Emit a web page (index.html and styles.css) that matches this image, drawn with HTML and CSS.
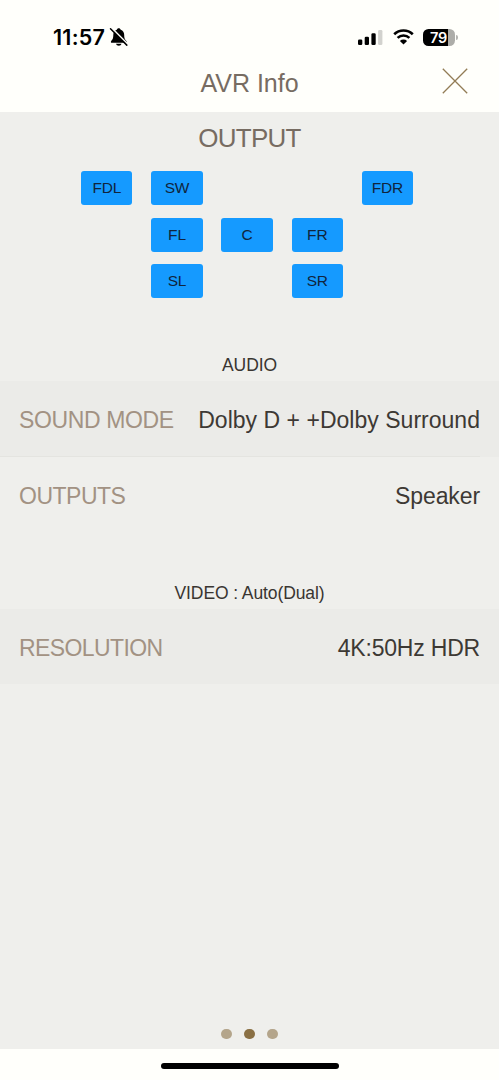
FILE: index.html
```html
<!DOCTYPE html>
<html lang="en">
<head>
<meta charset="utf-8">
<meta name="viewport" content="width=device-width, initial-scale=1">
<title>AVR Info</title>
<link rel="stylesheet" href="styles.css">
</head>
<body>
<div class="screen">
  <div class="status">
    <span class="time">11:57</span>
    <svg class="bell" width="20" height="20" viewBox="0 0 20 20" aria-hidden="true">
      <path d="M9.7 1.2c-1 0-1.7.6-1.9 1.5C5.5 3.5 4.3 5.300 4.300 8c0 3.700-1 4.700-2.100 6-.7.9-.3 1.800.7 1.800h13.800c1 0 1.400-.9.700-1.800-1.200-1.300-2.200-2.300-2.200-6 0-2.700-1.200-4.500-3.500-5.300-.2-.9-1-1.500-2-1.500z"/>
      <path d="M7 16.800h5.500c-.3 1.300-1.300 2-2.700 2s-2.500-.7-2.800-2z"/>
      <path class="bell-gap" d="M2.600.9 19 17.400"/>
      <path class="bell-slash" d="M1.500 1.800 17.800 18.100"/>
    </svg>
    <span class="spacer"></span>
    <svg class="signal" width="25" height="17" viewBox="0 0 25 17" aria-hidden="true">
      <rect x="0" y="10.500" width="4.300" height="5.500" rx="1.300"/>
      <rect x="6.700" y="7.700" width="4.300" height="8.300" rx="1.300"/>
      <rect x="13.400" y="4.300" width="4.300" height="11.700" rx="1.300"/>
      <rect class="off" x="20.100" y="1" width="4.300" height="15" rx="1.300"/>
    </svg>
    <svg class="wifi" width="21" height="16" viewBox="0 0 21 16" aria-hidden="true">
      <path class="arc" d="M1.200 5.300a13.400 13.400 0 0 1 18.600 0M4.600 8.900a8.500 8.500 0 0 1 11.800 0"/>
      <path d="M10.500 15.500 6.900 12a5.100 5.100 0 0 1 7.200 0z"/>
    </svg>
    <div class="battery"><span>79</span></div>
    <i class="battery-tip"></i>
  </div>
  <header class="header">
    <h1>AVR Info</h1>
    <svg class="close" width="26" height="26" viewBox="0 0 26 26" role="img" aria-label="Close"><path d="M.8.800 25.200 25.200M25.200.800.800 25.200"/></svg>
  </header>
  <main class="content">
    <h2 class="output-title">OUTPUT</h2>
    <div class="speakers">
      <span class="chip">FDL</span><span class="chip">SW</span><span class="chip col5">FDR</span>
      <span class="chip col2">FL</span><span class="chip">C</span><span class="chip">FR</span>
      <span class="chip col2">SL</span><span class="chip col4">SR</span>
    </div>
    <h3 class="section audio">AUDIO</h3>
    <div class="row shaded"><span class="label sound">SOUND MODE</span><span class="value dolby">Dolby D + +Dolby Surround</span></div>
    <div class="divider"></div>
    <div class="row outputs"><span class="label">OUTPUTS</span><span class="value">Speaker</span></div>
    <h3 class="section video">VIDEO : Auto(Dual)</h3>
    <div class="row shaded last"><span class="label resolution">RESOLUTION</span><span class="value hdr">4K:50Hz HDR</span></div>
    <div class="dots"><i></i><i class="active"></i><i></i></div>
  </main>
  <footer class="home"><div class="home-bar"></div></footer>
</div>
</body>
</html>
```
FILE: styles.css
```css
* { box-sizing: border-box; }
body { margin: 0; background: #fffffb; font-family: "Liberation Sans", Arial, sans-serif; }
h1, h2, h3 { margin: 0; font-weight: 400; }
.screen { width: 499px; height: 1080px; display: flex; flex-direction: column; overflow: hidden; }
.status { height: 60px; padding: 14px 41px 0 53px; display: flex; align-items: center; flex: none; }
.time { font: 600 21.500px/24px Inter, sans-serif; letter-spacing: .25px; color: #000; }
.bell { margin-left: 4px; }
.bell-gap { stroke: #fffffb; stroke-width: 1.500; }
.bell-slash { stroke: #000; stroke-width: 1.500; stroke-linecap: round; }
.spacer { flex: 1; }
.off { fill: #d2d2ce; }
.wifi { margin: 0 9px 0 10px; }
.arc { fill: none; stroke: #000; stroke-width: 2.600; }
.battery { width: 32px; height: 17px; border-radius: 5.500px; background: linear-gradient(90deg, #000 79%, #adada9 79%); color: #fff; font: 600 14.500px/17px Inter, sans-serif; text-align: center; letter-spacing: -.3px; padding-right: 1px; }
.battery-tip { width: 2px; height: 5px; margin-left: 1px; border-radius: 0 2px 2px 0; background: #b5b5b1; }
.header { height: 52px; flex: none; display: grid; grid-template-columns: 1fr auto 1fr; padding: 0 31px; }
.header h1 { grid-column: 2; font-size: 25px; line-height: 46px; color: #776c62; }
.close { justify-self: end; margin-top: 8px; fill: none; stroke: #927c55; stroke-width: 1.300; }
.content { height: 937px; flex: none; display: flex; flex-direction: column; background: #efefec; }
.output-title { height: 59px; text-align: center; font-size: 26px; line-height: 52px; letter-spacing: -.75px; color: #776c62; }
.speakers { display: grid; grid-template-columns: repeat(5, 51.300px); grid-template-rows: repeat(3, 34px); gap: 12.600px 18.850px; justify-content: center; padding-right: 4.800px; }
.chip { border-radius: 3px; background: #159aff; color: #10253d; font-size: 15.500px; line-height: 34px; letter-spacing: -.2px; text-align: center; }
.col2 { grid-column: 2; }
.col4 { grid-column: 4; }
.col5 { grid-column: 5; }
.section { text-align: center; color: #393531; font-size: 17.500px; line-height: 33px; letter-spacing: -.1px; }
.audio { height: 32px; margin-top: 51px; }
.row { height: 76px; flex: none; padding: 0 19px; display: flex; justify-content: space-between; line-height: 78px; font-size: 23px; }
.shaded { background: #ebebe8; }
.last { height: 75px; }
.label { color: #a29283; letter-spacing: -.5px; }
.sound { letter-spacing: -.38px; }
.resolution { letter-spacing: -.6px; }
.value { color: #3d3934; letter-spacing: -.1px; }
.dolby { letter-spacing: .02px; }
.hdr { letter-spacing: -.2px; }
.divider { height: 1px; flex: none; margin: -1px 19px 0 0; background: #e4e4e0; }
.video { height: 32px; margin-top: 44px; }
.dots { margin-top: auto; height: 20px; display: flex; justify-content: center; gap: 12.600px; }
.dots i { width: 10.300px; height: 10.300px; border-radius: 50%; background: #b4a58b; }
.dots .active { background: #8a7044; }
.home { height: 31px; padding-top: 14px; display: flex; justify-content: center; }
.home-bar { width: 178px; height: 6px; border-radius: 3px; background: #000; }
```
